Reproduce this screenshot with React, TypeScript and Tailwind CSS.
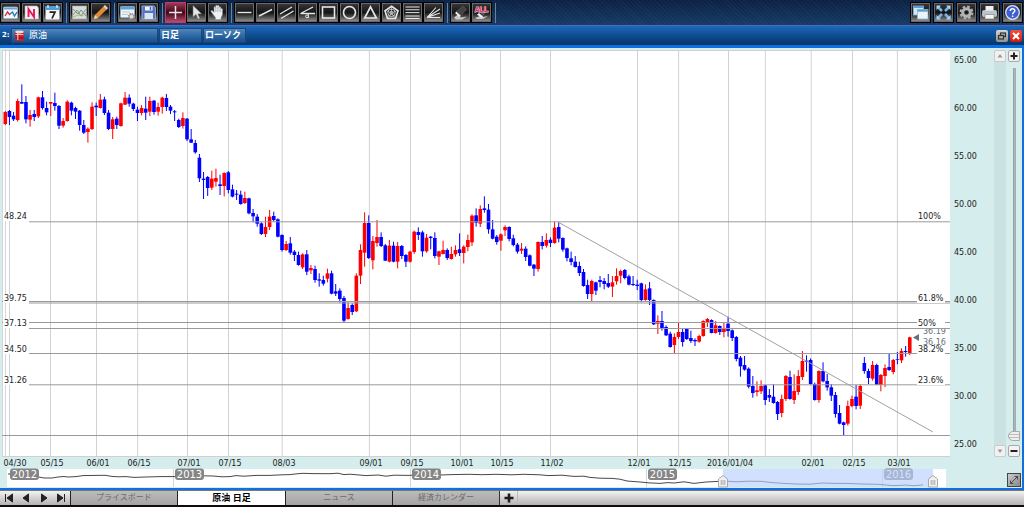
import type { ReactNode } from "react";

type Bar = [kind: "u" | "d", high: number, top: number, bottom: number, low: number];

// bar prices are kept in thirds of a pixel, counted down from each block's base
const blocks: { base: number; bars: Bar[] }[] = [
  {
    base: 70,
    bars: [
      ["u", 123, 126, 162, 165], ["d", 120, 123, 141, 165], ["d", 126, 137, 148, 153],
      ["u", 86, 93, 150, 155], ["d", 43, 96, 101, 101], ["d", 78, 96, 148, 160],
      ["u", 120, 135, 149, 170], ["d", 120, 132, 141, 153], ["u", 80, 82, 139, 144],
      ["d", 63, 82, 114, 119], ["d", 95, 114, 127, 136], ["u", 96, 96, 101, 138],
      ["d", 68, 99, 108, 122], ["d", 105, 108, 167, 177], ["u", 144, 153, 167, 173],
      ["u", 91, 95, 153, 155], ["d", 95, 98, 122, 136], ["d", 110, 114, 125, 147],
      ["d", 120, 122, 165, 182], ["d", 150, 165, 188, 192], ["u", 172, 176, 186, 218],
      ["u", 97, 110, 177, 180], ["d", 98, 107, 112, 138], ["u", 72, 89, 114, 116],
      ["d", 80, 88, 129, 135], ["d", 120, 128, 177, 180], ["u", 141, 148, 177, 207],
      ["d", 140, 146, 165, 177], ["u", 98, 100, 168, 170], ["u", 66, 83, 104, 105],
      ["d", 73, 83, 101, 110], ["d", 98, 101, 117, 123], ["d", 110, 119, 129, 153],
      ["u", 105, 114, 129, 136], ["d", 80, 116, 128, 150], ["u", 80, 93, 125, 138],
      ["d", 90, 92, 126, 134], ["u", 98, 111, 125, 137], ["u", 80, 83, 111, 131],
      ["d", 72, 84, 111, 123], ["d", 105, 110, 122, 132], ["d", 120, 124, 127, 153],
      ["d", 146, 150, 171, 174], ["u", 127, 144, 168, 176], ["d", 144, 146, 208, 213],
      ["d", 177, 208, 218, 219], ["d", 210, 219, 247, 251], ["d", 252, 263, 325, 336],
      ["d", 306, 326, 330, 387], ["d", 318, 321, 354, 378], ["u", 302, 326, 353, 360],
      ["u", 296, 324, 335, 350], ["d", 314, 343, 348, 375], ["u", 307, 309, 348, 379],
      ["d", 303, 307, 360, 370], ["d", 344, 358, 380, 382], ["d", 360, 371, 374, 390],
      ["d", 362, 374, 402, 404], ["u", 365, 384, 399, 402],
    ],
  },
  {
    base: 190,
    bars: [
      ["d", 23, 25, 70, 73], ["d", 57, 69, 79, 97], ["d", 72, 80, 101, 110],
      ["d", 97, 100, 132, 135], ["u", 80, 111, 132, 141], ["u", 60, 80, 111, 120],
      ["d", 65, 78, 90, 95], ["d", 85, 88, 140, 142], ["d", 133, 135, 180, 185],
      ["u", 153, 162, 180, 183], ["d", 141, 160, 188, 194], ["d", 180, 185, 195, 213],
      ["d", 185, 195, 225, 227], ["u", 190, 193, 232, 237], ["d", 180, 193, 245, 255],
      ["u", 225, 234, 241, 252], ["d", 227, 237, 270, 278], ["d", 250, 268, 272, 290],
      ["d", 257, 270, 281, 287], ["u", 236, 250, 266, 277], ["d", 242, 250, 311, 313],
      ["d", 282, 304, 311, 318], ["d", 295, 302, 327, 338], ["d", 318, 324, 392, 397],
      ["u", 337, 354, 387, 389], ["d", 340, 345, 366, 375], ["u", 250, 257, 364, 366],
      ["u", 163, 180, 257, 282], ["u", 67, 99, 188, 230], ["d", 76, 99, 204, 207],
      ["u", 138, 153, 211, 238], ["u", 90, 141, 159, 170], ["d", 127, 141, 168, 171],
      ["d", 162, 166, 212, 213], ["u", 150, 167, 215, 217], ["d", 155, 167, 215, 217],
      ["u", 156, 168, 215, 235], ["d", 165, 168, 198, 207], ["d", 192, 195, 215, 231],
      ["u", 182, 185, 215, 218], ["u", 122, 125, 186, 192], ["d", 112, 126, 135, 150],
      ["d", 122, 127, 184, 200], ["u", 132, 143, 184, 188], ["d", 138, 140, 144, 178],
      ["d", 127, 144, 198, 205], ["u", 182, 184, 200, 225], ["u", 152, 180, 192, 193],
      ["d", 175, 180, 204, 210], ["u", 170, 192, 207, 209], ["u", 166, 180, 193, 200],
      ["d", 130, 178, 189, 198], ["u", 166, 170, 189, 220], ["u", 134, 150, 171, 184],
      ["u", 73, 77, 157, 168], ["d", 55, 76, 98, 110], ["u", 46, 57, 101, 111],
      ["d", 19, 55, 60, 68], ["d", 42, 59, 118, 131], ["d", 90, 118, 146, 148],
    ],
  },
  {
    base: 180,
    bars: [
      ["d", 165, 170, 186, 194], ["u", 160, 163, 182, 212], ["u", 136, 141, 151, 168],
      ["d", 139, 141, 177, 184], ["d", 164, 175, 195, 199], ["d", 189, 194, 215, 221],
      ["u", 189, 206, 212, 222], ["d", 199, 206, 231, 243], ["d", 223, 226, 257, 259],
      ["d", 252, 254, 266, 288], ["u", 184, 186, 267, 275], ["d", 168, 186, 198, 208],
      ["u", 160, 180, 197, 203], ["d", 172, 179, 189, 201], ["u", 124, 143, 189, 191],
      ["d", 126, 141, 176, 187], ["d", 172, 174, 209, 215], ["d", 203, 205, 234, 244],
      ["d", 215, 235, 246, 256], ["d", 228, 245, 261, 263], ["d", 245, 258, 279, 288],
      ["d", 267, 276, 318, 320], ["d", 299, 315, 342, 357], ["u", 299, 303, 342, 363],
      ["d", 305, 307, 332, 345], ["d", 288, 300, 306, 322], ["d", 294, 303, 312, 328],
      ["d", 282, 309, 320, 324], ["u", 288, 307, 320, 351], ["u", 265, 288, 304, 314],
      ["u", 269, 273, 287, 310], ["d", 267, 270, 294, 298], ["d", 284, 289, 314, 316],
      ["d", 288, 312, 315, 318], ["d", 299, 314, 318, 330], ["d", 308, 310, 360, 367],
      ["u", 313, 328, 360, 362], ["d", 306, 325, 360, 375],
    ],
  },
  {
    base: 250,
    bars: [
      ["d", 148, 150, 223, 225], ["u", 196, 213, 221, 252], ["d", 183, 213, 236, 242],
      ["d", 226, 231, 256, 258], ["d", 245, 251, 291, 293], ["u", 250, 261, 285, 309],
      ["u", 216, 246, 261, 267], ["d", 235, 246, 276, 290], ["d", 236, 237, 267, 270],
      ["d", 242, 264, 273, 279], ["d", 265, 270, 274, 288], ["u", 254, 258, 275, 278],
      ["u", 211, 213, 258, 260], ["u", 204, 207, 216, 231], ["d", 208, 210, 249, 250],
      ["u", 213, 226, 249, 251], ["d", 226, 228, 246, 255], ["u", 219, 234, 246, 262],
      ["d", 200, 221, 243, 260], ["d", 238, 241, 264, 273], ["d", 258, 261, 327, 334],
      ["d", 318, 323, 349, 380], ["d", 318, 345, 359, 362], ["d", 352, 356, 410, 415],
      ["d", 378, 408, 429, 443], ["u", 394, 421, 426, 439], ["u", 391, 408, 424, 432],
      ["d", 404, 406, 450, 465], ["d", 417, 435, 443, 456], ["d", 403, 440, 459, 461],
      ["d", 453, 456, 492, 510], ["u", 434, 447, 489, 502], ["u", 375, 378, 447, 453],
      ["d", 362, 381, 447, 449], ["u", 373, 423, 450, 462], ["u", 360, 378, 426, 435],
      ["u", 303, 333, 381, 390], ["d", 316, 332, 335, 365],
    ],
  },
  {
    base: 320,
    bars: [
      ["d", 115, 120, 192, 194], ["d", 188, 192, 240, 242], ["u", 151, 153, 240, 248],
      ["d", 127, 153, 184, 187], ["d", 162, 183, 202, 212], ["d", 192, 202, 227, 243],
      ["d", 216, 225, 282, 293], ["d", 255, 279, 311, 313], ["d", 305, 307, 315, 345],
      ["u", 242, 258, 311, 317], ["u", 227, 237, 258, 262], ["d", 195, 230, 258, 268],
      ["u", 193, 198, 257, 267], ["d", 111, 129, 153, 161], ["d", 146, 153, 174, 192],
      ["u", 123, 135, 176, 182], ["d", 131, 135, 194, 195], ["u", 162, 165, 195, 214],
      ["u", 133, 144, 168, 201], ["d", 99, 141, 150, 153], ["u", 117, 120, 156, 163],
      ["d", 96, 117, 119, 133], ["u", 85, 93, 121, 129], ["d", 78, 93, 96, 110],
      ["u", 50, 52, 99, 105],
    ],
  },
];

const candles = blocks
  .flatMap(({ base, bars }) =>
    bars.map(([kind, ...ys]) => ({ kind, ys: ys.map((y) => base + y / 3) }))
  )
  .map((c, i) => ({ ...c, x: 5.3 + i * 4.13 }));

const dates = [
  { x: 9.5, label: "04/30", at: 15 },
  { x: 50.5, label: "05/15", at: 52 },
  { x: 96.5, label: "06/01", at: 98 },
  { x: 137.7, label: "06/15", at: 139 },
  { x: 187.5, label: "07/01", at: 189 },
  { x: 228.5, label: "07/15", at: 230 },
  { x: 282.2, label: "08/03", at: 284 },
  { x: 369.4, label: "09/01", at: 371 },
  { x: 410.5, label: "09/15", at: 412 },
  { x: 460.4, label: "10/01", at: 462 },
  { x: 500.5, label: "10/15", at: 502 },
  { x: 550.5, label: "11/02", at: 552 },
  { x: 637.5, label: "12/01", at: 639 },
  { x: 678.6, label: "12/15", at: 680 },
  { x: 728.5, label: "2016/01/04", at: 730 },
  { x: 811.2, label: "02/01", at: 813 },
  { x: 852.5, label: "02/15", at: 854 },
  { x: 897.4, label: "03/01", at: 899 },
];

const prices = ["65.00", "60.00", "55.00", "50.00", "45.00", "40.00", "35.00", "30.00", "25.00"];

const levels = [
  { y: 221.8, text: 219, price: "48.24", ratio: "100%" },
  { y: 303, text: 301, price: "39.75", ratio: "61.8%" },
  { y: 328.5, text: 326, price: "37.13", ratio: "50%" },
  { y: 353.5, text: 352, price: "34.50", ratio: "38.2%" },
  { y: 384.8, text: 383, price: "31.26", ratio: "23.6%" },
];

const years = [
  { x: 10, label: "2012" },
  { x: 175, label: "2013" },
  { x: 412, label: "2014" },
  { x: 648, label: "2015" },
  { x: 884, label: "2016" },
];

const history =
  "8,474 13,474 20,475 28,476 39,477 44,478 52,478 58,477 64,476.5 68,477 76,476.6 83,475.6 96,475.4 105,475.3 112,476.4 118,476.8 126,476.6 134,477.4 146,477 160,476.6 174,476.6 190,476.2 203,475.8 213,476 222,476.8 230,476.6 236,475.6 244,476.2 256,475.4 270,475.4 282,474.8 290,474.6 297,473.8 303,473.3 312,473.6 330,473.7 338,473.2 344,474.6 350,474.2 366,475.6 378,475 386,476.2 394,475.2 408,475.4 426,474.8 440,475 452,474.6 470,474.3 482,474.7 496,474.3 512,474.8 524,474.3 540,474.8 548,475.6 562,475.2 574,476.4 584,476.2 590,477.4 600,478.2 612,478.4 620,479.2 627,481 640,482 648,482.8 660,483.4 668,482.6 674,483 684,481.8 694,483.4 706,482 718,481.4 726,481.2 736,481.8 748,481.2 762,481.4 772,482.6 784,483.4 796,484 810,484.2 822,483 834,483.4 846,483.4 862,484 878,484.3 886,485 892,485.6 900,485.4 906,485 914,485.8 923,484.8";

const ToolButton = ({
  label,
  active = false,
  children,
}: {
  label: string;
  active?: boolean;
  children: ReactNode;
}) => (
  <button
    type="button"
    aria-label={label}
    className={
      active
        ? "size-[21px] shrink-0 border border-[#c23a66] bg-linear-to-b from-[#a03a58] via-[#3c0a18] to-[#c04a70]"
        : "size-[21px] shrink-0 border border-black bg-linear-to-b from-[#3a3a3a] via-[#161616] to-[#9a9a9a] shadow-[inset_0_0_0_1px_#6a6a6a]"
    }
  >
    <svg
      viewBox="0 0 19 19"
      className="block size-full"
      fill="none"
      stroke="#e6e6e6"
      strokeWidth="1.4"
    >
      {children}
    </svg>
  </button>
);

const Divider = () => (
  <div className="flex w-[6px] shrink-0 justify-center">
    <div className="h-5 w-px bg-[#6d8199]" />
  </div>
);

const Toolbar = () => (
  <header className="flex h-[25px] items-center bg-[repeating-linear-gradient(45deg,#ffffff08_0px,#ffffff08_1px,transparent_1px,transparent_3px),linear-gradient(#0c2143,#153b66)] pr-px">
    <ToolButton label="チャート">
      <rect x="2.500" y="4" width="14" height="11.500" rx="1" fill="#f4f7fa" stroke="#9fb8d0" strokeWidth=".8" />
      <path d="M3 4.500h13v2H3z" fill="#6aa5d8" stroke="none" />
      <path d="M4 13l2.500-4L9 12" stroke="#d03030" />
      <path d="M9 11l2.500-2 2 4 2.500-4" stroke="#2878b8" />
    </ToolButton>
    <ToolButton label="ニュース">
      <path d="M3 3h12l1.500 2v11H3z" fill="#f2f2f2" stroke="#bbb" strokeWidth=".6" />
      <path d="M6.500 14V6l5.500 8V6" stroke="#e4155a" strokeWidth="1.900" />
    </ToolButton>
    <ToolButton label="カレンダー">
      <rect x="2.500" y="3" width="14" height="13.500" rx="1" fill="#f7f7f7" stroke="none" />
      <path d="M2.500 3h14v4h-14z" fill="#4f9fd2" stroke="none" />
      <path d="M5 2v3M14 2v3" stroke="#dfeefa" />
      <path d="M6.500 9.200h5.500L9 15.500" stroke="#222" strokeWidth="1.700" />
    </ToolButton>
    <Divider />
    <ToolButton label="テクニカル">
      <rect x="2.500" y="3" width="14" height="13" fill="#d7dcd9" stroke="#aaa" strokeWidth=".6" />
      <path d="M3 12l4-5 4 6 5-7" stroke="#7da356" strokeWidth="1" />
      <path d="M3 6l5 5 3-4 5 6" stroke="#6f88b4" strokeWidth="1" />
      <path d="M3 14l5-2 4 1 4-3" stroke="#b0b060" strokeWidth=".8" />
    </ToolButton>
    <ToolButton label="描画">
      <path d="M3 16l1-4L13.500 2.500l3 3L7 15z" fill="#e08a3c" stroke="#a85a1c" strokeWidth=".6" />
      <path d="M3 16l1-4 3 3z" fill="#f0d8b8" stroke="none" />
      <path d="M12.500 3.500l1.500-1.500 3 3-1.500 1.500z" fill="#d8d8d8" stroke="none" />
    </ToolButton>
    <Divider />
    <ToolButton label="画面設定">
      <rect x="2.500" y="3.500" width="14" height="11" rx="1" fill="#eef3f7" stroke="#8fb2d0" strokeWidth=".8" />
      <path d="M2.500 3.500h14v3h-14z" fill="#5fa3d6" stroke="none" />
      <path d="M4 9h8M4 11.500h6" stroke="#b8c6d2" strokeWidth=".9" />
      <circle cx="13.500" cy="13.500" r="2.600" stroke="#888" strokeWidth="2" fill="#ddd" strokeDasharray="1.300 .7" />
    </ToolButton>
    <ToolButton label="保存">
      <path d="M3 3h12l1.500 1.500V16H3z" fill="#5374c4" stroke="#a5b9e6" strokeWidth=".8" />
      <path d="M6 3.500h7.500v4H6z" fill="#eef2fb" stroke="none" />
      <path d="M5.500 10h8.500v6H5.500z" fill="#dbe3f4" stroke="none" />
      <path d="M11.500 4v3" stroke="#3c5cae" />
    </ToolButton>
    <Divider />
    <ToolButton label="十字カーソル" active>
      <path d="M9.500 3v13M3 9.500h13" stroke="#f4dfe6" strokeWidth="1.500" />
    </ToolButton>
    <ToolButton label="選択">
      <path d="M6 2.500v11.500l3-2.500 2 4.500 1.800-.8-2-4.200 3.700-.3z" fill="#e6e6e6" stroke="#777" strokeWidth=".6" />
    </ToolButton>
    <ToolButton label="移動">
      <path
        d="M5.500 12L3 8.500c-.5-1 .8-1.500 1.500-.7L6 9.300V4.500c0-1.100 1.500-1.100 1.600 0V3.200c0-1.200 1.700-1.200 1.700 0 0-1.200 1.700-1.200 1.800.2v1c0-1 1.600-1 1.600 0l.3 1.600c.2-.8 1.500-.8 1.500.2V11c0 1.500-1 2.500-1.500 3.500V16.500H7.500v-2z"
        fill="#f0f0f0"
        stroke="#8494a8"
        strokeWidth=".5"
      />
      <path d="M7.700 4v5M9.300 4v5M11 4v5M12.700 6v3" stroke="#7f90a5" strokeWidth=".5" />
    </ToolButton>
    <Divider />
    <ToolButton label="水平線">
      <path d="M2.500 9.500h14" />
    </ToolButton>
    <ToolButton label="トレンドライン">
      <path d="M3 13L16 6.500" />
    </ToolButton>
    <ToolButton label="平行線">
      <path d="M3 11L15 4M4 15.500L16.500 8" />
    </ToolButton>
    <ToolButton label="角度線">
      <path d="M2.500 10.500L15 4M2.500 10.500H17" />
      <circle cx="9" cy="13.300" r="1.400" strokeWidth="1" />
      <path d="M10.500 11v4" strokeWidth=".8" />
    </ToolButton>
    <ToolButton label="四角形">
      <rect x="3.500" y="4" width="12" height="11" strokeWidth="1.600" />
    </ToolButton>
    <ToolButton label="円">
      <circle cx="9.500" cy="9.500" r="6" strokeWidth="1.700" />
    </ToolButton>
    <ToolButton label="三角形">
      <path d="M9.500 3.800L15.300 15H3.700z" strokeWidth="1.700" />
    </ToolButton>
    <ToolButton label="五角形">
      <path d="M9.500 3.200l6.500 4.700-2.500 7.600h-8L3 7.900z" strokeWidth="1.700" />
      <circle cx="9.500" cy="9.800" r="3.700" strokeWidth=".8" />
      <circle cx="9.500" cy="9.800" r="1.600" strokeWidth=".8" />
      <path d="M9.500 4v6l5-2M9.500 10l3.500 5M9.500 10L6 15M9.500 10l-5-2" strokeWidth=".6" />
    </ToolButton>
    <ToolButton label="フィボナッチ">
      <path d="M2.500 4h14M2.500 6.800h14M2.500 9.600h14M2.500 13h14M2.500 15.500h14" strokeWidth="1" />
    </ToolButton>
    <ToolButton label="ファン">
      <path d="M3 14.500L12 4.500M3 14.500L16 6M3 14.500l13-4.500M3 14.500h13" strokeWidth="1.100" />
    </ToolButton>
    <Divider />
    <ToolButton label="消去">
      <path d="M3 14.500l4-3 3 3 6-1-5 3H5z" fill="#c8c8c8" stroke="none" />
      <path d="M4 10l4.500 4 1.500-1.500-4.500-4z" fill="#f0f0f0" stroke="none" />
      <path d="M5.500 8.500L12 3l3.500 3.500L10 12.500z" fill="#444" stroke="#666" strokeWidth=".5" />
    </ToolButton>
    <ToolButton label="全消去">
      <path d="M3 15l5-2 3 1 5-1-5 3H5z" fill="#c8c8c8" stroke="none" />
      <path d="M5 11.500l2-1.500 4 3.500-1.500 1.500z" fill="#f0f0f0" stroke="none" />
      <path d="M8 9.500h6L11 13z" fill="#555" stroke="none" />
      <text
        x="9.500"
        y="8.500"
        textAnchor="middle"
        fill="#e0205c"
        stroke="#f5dce4"
        strokeWidth="1"
        paintOrder="stroke"
        className="font-['Liberation_Sans'] text-[7px] font-bold"
      >
        ALL
      </text>
    </ToolButton>
    <Divider />
    <div className="ml-auto flex gap-[2px]">
      <ToolButton label="ウィンドウ整列">
        <rect x="2.500" y="3" width="10" height="9" fill="#d5e5f2" stroke="#8cb8dc" strokeWidth=".8" />
        <path d="M2.500 3h10v2h-10z" fill="#5d9fd0" stroke="none" />
        <rect x="6.500" y="6.500" width="10.500" height="9.500" fill="#edf2f6" stroke="#8cb8dc" strokeWidth=".8" />
        <path d="M6.500 6.500H17v2.200H6.500z" fill="#5d9fd0" stroke="none" />
      </ToolButton>
      <ToolButton label="全画面">
        <path d="M4 4l4 4M15 4l-4 4M4 15l4-4M15 15l-4-4" stroke="#74b6ea" strokeWidth="2.600" />
        <path d="M2.500 2.500h4.500l-4.500 4.500zM16.500 2.500v4.500L12 2.500zM2.500 16.500V12L7 16.500zM16.500 16.500H12l4.500-4.500z" fill="#a6d2f4" stroke="none" />
      </ToolButton>
      <ToolButton label="設定">
        <circle cx="9.500" cy="9.500" r="5.900" stroke="#b0b0b0" strokeWidth="2.200" strokeDasharray="2.600 2.030" />
        <circle cx="9.500" cy="9.500" r="3.800" stroke="#b4b4b4" strokeWidth="3" />
      </ToolButton>
      <ToolButton label="印刷">
        <path d="M5.500 3h8v5h-8z" fill="#f0f0f0" stroke="none" />
        <rect x="2.500" y="7.500" width="14" height="6" rx="1" fill="#b9c4d0" stroke="#dde3e8" strokeWidth=".6" />
        <path d="M5 11.500h9V16H5z" fill="#f4f4f4" stroke="#777" strokeWidth=".6" />
      </ToolButton>
      <ToolButton label="ヘルプ">
        <circle cx="9.500" cy="9.500" r="6.800" fill="#3f5ed0" stroke="#dfe5f8" strokeWidth="1.300" />
        <path d="M7.300 8c0-3 4.500-2.800 4.500-.3 0 1.500-2.200 1.700-2.200 3.500M9.600 12.500v1.600" stroke="#fff" strokeWidth="1.500" />
      </ToolButton>
    </div>
  </header>
);

const TitleBar = () => (
  <div className="flex h-[23px] items-center justify-between border-t border-b-[3px] border-t-[#5566b8] border-b-[#0a6fe0] bg-linear-to-b from-[#1b68bb] to-[#063468] px-[2px] text-[9px] leading-none text-white">
    <div className="flex items-center gap-px">
      <span className="w-2 font-['DejaVu_Sans'] text-[7px] font-bold">2:</span>
      <button
        type="button"
        className="flex h-[15px] w-[147px] items-center gap-1 border border-[#1c4674] bg-linear-to-b from-[#4f86bd] via-[#2e6aa6] to-[#174f8c] px-[2px]"
      >
        <svg viewBox="0 0 11 12" className="h-3 w-[11px]">
          <rect x="1" y="1" width="9" height="10" rx="2" fill="#c8202a" />
          <rect x="1.500" y="4" width="8" height="1" fill="#f3b8b8" />
          <rect x="1.500" y="7.500" width="8" height="1" fill="#7c1016" />
          <ellipse cx="5.500" cy="2" rx="4.300" ry="1.400" fill="#ecdede" />
          <rect x="3" y="3" width="1.500" height="7" fill="#fff" opacity=".55" />
        </svg>
        原油
      </button>
      <button
        type="button"
        className="h-[15px] w-[43px] border border-[#1c4674] bg-linear-to-b from-[#4f86bd] via-[#2e6aa6] to-[#174f8c] px-px text-left font-bold"
      >
        日足
      </button>
      <button
        type="button"
        className="h-[15px] w-[43px] border border-[#1c4674] bg-linear-to-b from-[#4f86bd] via-[#2e6aa6] to-[#174f8c] px-px text-left font-bold"
      >
        ローソク
      </button>
    </div>
    <div className="flex gap-[2px]">
      <button type="button" aria-label="元に戻す" className="size-3 rounded-xs bg-linear-to-b from-[#d8d8d8] to-[#909090]">
        <svg viewBox="0 0 12 12" className="block size-full" fill="#aaa" stroke="#333" strokeWidth="1.200">
          <rect x="4.500" y="3" width="5" height="3.500" />
          <rect x="2.500" y="5.500" width="5" height="3.500" />
        </svg>
      </button>
      <button type="button" aria-label="閉じる" className="size-3 rounded-xs bg-linear-to-b from-[#f0503c] to-[#cc1a10]">
        <svg viewBox="0 0 12 12" className="block size-full" stroke="#fff" strokeWidth="2">
          <path d="M3 3l6 6M9 3L3 9" />
        </svg>
      </button>
    </div>
  </div>
);

const PriceChart = () => (
  <svg viewBox="0 48 994 420" className="block w-full font-['DejaVu_Sans'] text-[8px]" fill="#222">
    <rect x="2" y="50" width="948" height="406" fill="#fff" />
    <path d="M2 456.500h948M2 50.500h948" stroke="#d0d0d0" />
    <path d="M2.500 50v406M5.500 50v406M765.400 50v406" stroke="#d6d6d6" />
    {dates.map((d) => (
      <g key={d.label}>
        <path d={`M${d.x} 50V456`} stroke="#d2d2d2" />
        <text x={d.at} y="466" textAnchor="middle">
          {d.label}
        </text>
      </g>
    ))}
    {candles.map(({ kind, ys: [high, top, bottom, low], x }) => (
      <g key={x} fill={kind === "u" ? "#ff0000" : "#0000ff"}>
        <rect x={x - 0.5} y={high} width="1" height={low - high} />
        <rect x={x - 1.8} y={top} width="3.6" height={bottom - top} />
      </g>
    ))}
    <path d="M2 301.500h948M2 322.500h948M2 435.500h948" stroke="#999" />
    <path d="M558 222L933 432" stroke="#a0a0a0" />
    <path d="M913 337.500l6-3.500v7z" fill="#687080" />
    <text x="923" y="334" fill="#687080">
      36.19
    </text>
    <text x="923" y="345" fill="#687080">
      36.16
    </text>
    {levels.map((l) => (
      <g key={l.price}>
        <path d={`M29 ${l.y}H950`} stroke="#9a9a9a" />
        <rect x="3" y={l.text - 7} width="26" height="9" fill="#fff" />
        <rect x="917" y={l.text - 7} width="28" height="9" fill="#fff" />
        <text x="4" y={l.text}>
          {l.price}
        </text>
        <text x="918" y={l.text}>
          {l.ratio}
        </text>
      </g>
    ))}
    {prices.map((p, i) => (
      <text key={p} x="954" y={63 + i * 48}>
        {p}
      </text>
    ))}
  </svg>
);

const Grip = ({ x }: { x: number }) => (
  <g stroke="#999" strokeWidth=".8">
    <path d={`M${x} 475.500l4.500 3.500v8h-9v-8z`} fill="#f0f0f0" strokeLinejoin="round" />
    <path d={`M${x - 1.8} 480v5M${x} 480v5M${x + 1.8} 480v5`} />
  </g>
);

const Overview = () => (
  <svg viewBox="0 468 994 20" className="block w-full font-['DejaVu_Sans'] text-[10px]">
    <rect x="7" y="469" width="939" height="18" fill="#fff" />
    {years.slice(1).map((y) => (
      <path key={y.label} d={`M${y.x - 1.5} 469v18`} stroke="#d6d6d6" />
    ))}
    <polyline points={history} fill="none" stroke="#333" strokeWidth=".9" />
    {years.map((y) => (
      <g key={y.label}>
        <rect x={y.x} y="468.5" width="29" height="11.5" rx="3" fill="#858585" />
        <text x={y.x + 14.5} y="478" textAnchor="middle" fill="#fff">
          {y.label}
        </text>
      </g>
    ))}
    <rect x="723" y="469" width="210" height="18" fill="#b9cffd" opacity=".65" />
    <Grip x={723} />
    <Grip x={933} />
  </svg>
);

const SideControls = () => (
  <div className="flex w-7 shrink-0 flex-col justify-between pt-[2px] pb-px">
    <div className="flex flex-1 gap-[2px]">
      <div className="flex w-3 flex-col justify-between bg-[#cbe2e3]">
        <button type="button" aria-label="上へ" className="h-3 rounded-xs border border-[#ccc] bg-[#f1f1f1] text-[#999]">
          <svg viewBox="0 0 10 10" className="block size-full" fill="currentColor">
            <path d="M5 3l2.500 3.500h-5z" />
          </svg>
        </button>
        <button type="button" aria-label="下へ" className="h-3 rounded-xs border border-[#ccc] bg-[#f1f1f1] text-[#999]">
          <svg viewBox="0 0 10 10" className="block size-full" fill="currentColor">
            <path d="M5 7l2.500-3.500h-5z" />
          </svg>
        </button>
      </div>
      <div className="flex w-3 flex-col">
        <button type="button" aria-label="拡大" className="size-3 rounded-xs border border-[#aaa] bg-[#f2f2f2]">
          <svg viewBox="0 0 10 10" className="block size-full" stroke="#222" strokeWidth="2">
            <path d="M5 1.500v7M1.500 5h7" />
          </svg>
        </button>
        <input
          type="range"
          aria-label="表示倍率"
          defaultValue={100}
          className="mt-[6px] mb-1 min-h-0 w-3 flex-1 appearance-none bg-[linear-gradient(90deg,transparent_5px,#8b9999_5px,#b5c2c2_7px,#8b9999_8px,transparent_8px)] [writing-mode:vertical-lr] [&::-webkit-slider-thumb]:h-[10px] [&::-webkit-slider-thumb]:w-3 [&::-webkit-slider-thumb]:appearance-none [&::-webkit-slider-thumb]:rounded-l-full [&::-webkit-slider-thumb]:rounded-r-sm [&::-webkit-slider-thumb]:border [&::-webkit-slider-thumb]:border-[#aaa] [&::-webkit-slider-thumb]:bg-[repeating-linear-gradient(#efefef_0px,#efefef_2px,#bbb_2px,#bbb_3px)] [&::-webkit-slider-thumb]:bg-[#efefef]"
        />
        <button type="button" aria-label="縮小" className="size-3 rounded-xs border border-[#aaa] bg-[#f2f2f2]">
          <svg viewBox="0 0 10 10" className="block size-full" stroke="#222" strokeWidth="2">
            <path d="M1.500 5h7" />
          </svg>
        </button>
      </div>
    </div>
    <button
      type="button"
      aria-label="最大化"
      className="mt-4 mr-px size-[14px] self-end border border-[#444] bg-linear-to-br from-[#ccc] to-[#888]"
    >
      <svg viewBox="0 0 12 12" className="block size-full" fill="none" stroke="#333" strokeWidth=".8">
        <path d="M2.500 9.500l7-7M6.500 2.500h3v3M2.500 6.500v3h3" />
      </svg>
    </button>
  </div>
);

const tabs = ["プライスボード", "原油 日足", "ニュース", "経済カレンダー"];

const pagers = [
  { label: "最初のタブ", path: "M3.500 3v8M10.500 3v8L5 7z" },
  { label: "前のタブ", path: "M9.500 3v8L4 7z" },
  { label: "次のタブ", path: "M4.500 3v8L10 7z" },
  { label: "最後のタブ", path: "M10.500 3v8M3.500 3v8L9 7z" },
];

const TabBar = () => (
  <nav className="flex h-[17px] border-t border-b-2 border-t-[#777] border-b-[#120a0c] bg-linear-to-b from-[#f2f2f2] to-[#b4b4b4]">
    <div className="flex w-[70px] shrink-0">
      {pagers.map((p) => (
        <button key={p.label} type="button" aria-label={p.label} className="flex-1">
          <svg viewBox="0 0 14 14" className="mx-auto block size-[14px]" fill="#222" stroke="#222">
            <path d={p.path} />
          </svg>
        </button>
      ))}
    </div>
    {tabs.map((t, i) => (
      <button
        key={t}
        type="button"
        className={
          i === 1
            ? "w-[108px] shrink-0 border-l border-[#222] bg-white text-[9px] leading-none font-bold text-black"
            : "w-[107px] shrink-0 border-l border-[#222] bg-linear-to-b from-[#bcbcbc] to-[#a4a4a4] text-[8px] leading-none text-[#6a6a6a]"
        }
      >
        {t}
      </button>
    ))}
    <button type="button" aria-label="タブを追加" className="w-[19px] shrink-0 border-x border-l-[#333] border-r-[#bbb]">
      <svg viewBox="0 0 14 14" className="mx-auto block size-[14px]" stroke="#1c1c1c" strokeWidth="2.600">
        <path d="M7 2.500v9M2.500 7h9" />
      </svg>
    </button>
  </nav>
);

const App = () => {
  return (
    <div className="w-full bg-[#d5eded] font-['Liberation_Sans','Noto_Sans_CJK_JP',sans-serif]">
      <Toolbar />
      <TitleBar />
      <main className="flex border-r-2 border-b-2 border-[#1070e0]">
        <div className="min-w-0 flex-1">
          <PriceChart />
          <Overview />
        </div>
        <SideControls />
      </main>
      <TabBar />
    </div>
  );
};

export default App;
